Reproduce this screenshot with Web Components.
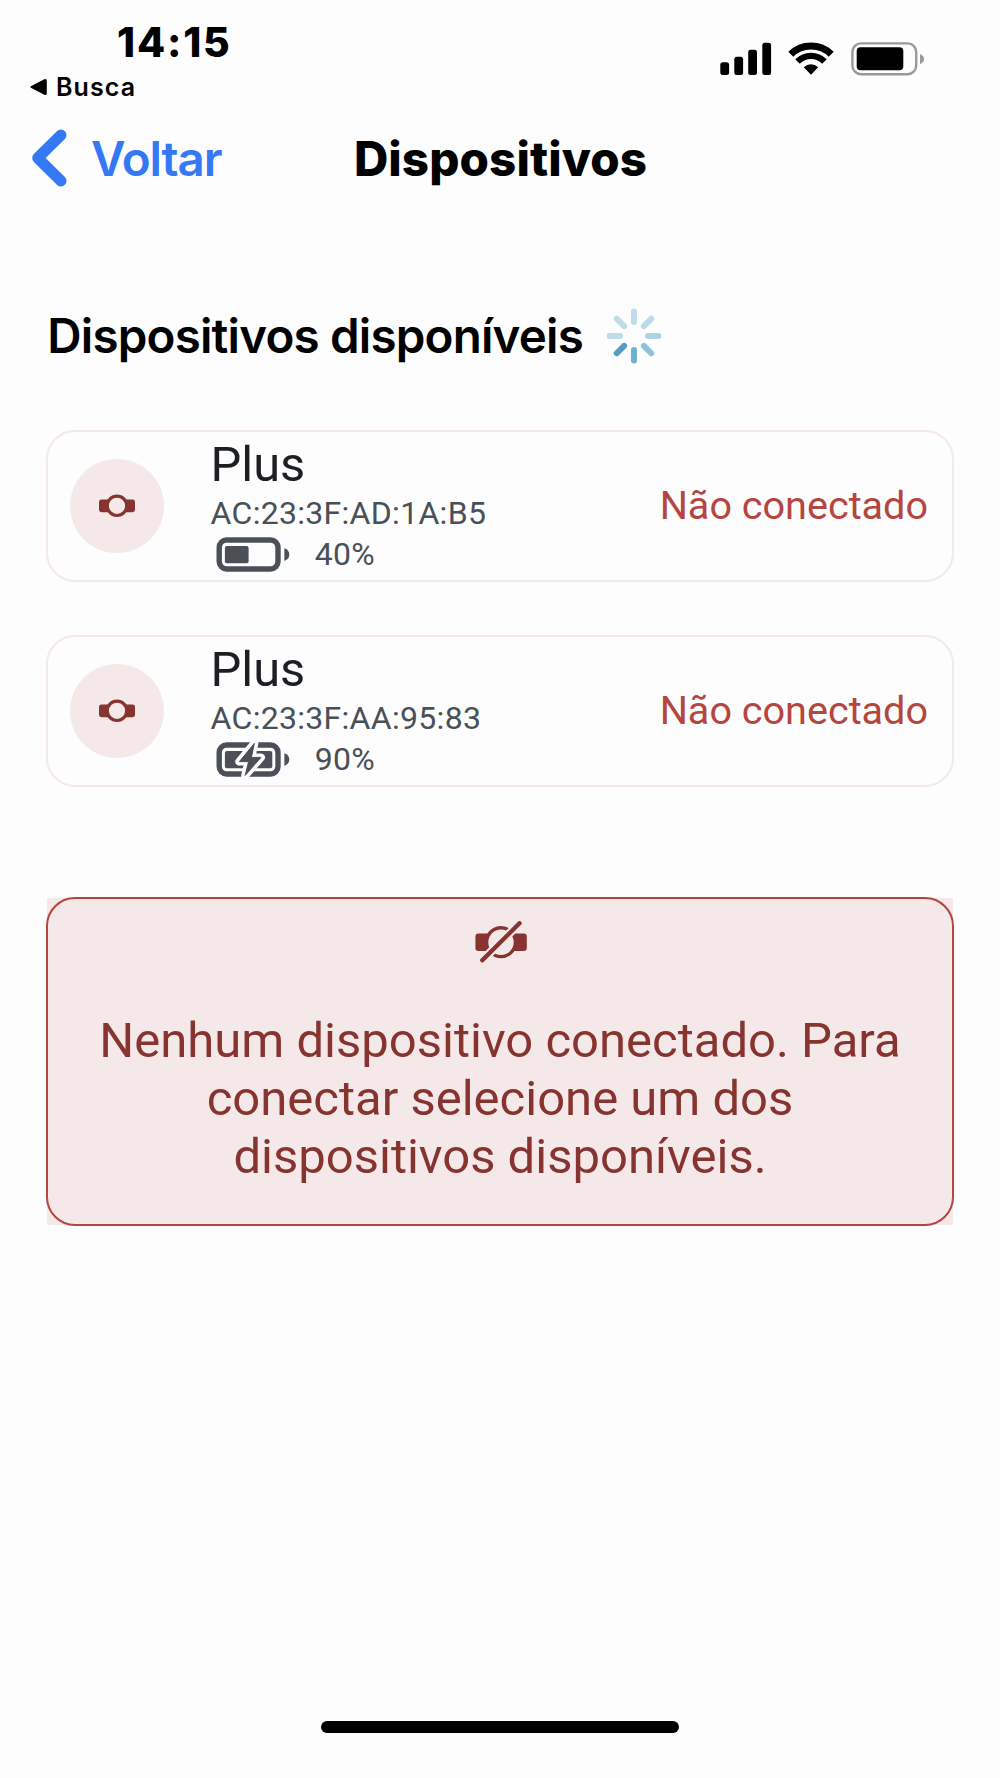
<!DOCTYPE html>
<html lang="pt-BR">
<head>
<meta charset="utf-8">
<title>Dispositivos</title>
<style>
body {
	margin: 0;
	height: 1778px;
	display: flex;
	flex-direction: column;
	background: #fdfdfd;
	color: #000;
	font-family: Inter, "Liberation Sans", sans-serif;
	--color-danger: #b5453f;
	--color-danger-dark: #873431;
	--color-danger-light: #f4e8e8;
	--color-link: #3478f6;
	--color-text: #1c1f24;
	--color-muted: #495057;
	--font-content: Roboto, "Liberation Sans", sans-serif;
}
main {
	flex: 1;
	padding: 91px 46px 0;
}
device-list {
	margin-top: 64px;
}
device-alert {
	margin: 111px 1px 0;
}
</style>
</head>
<body>
<status-bar time="14:15" app="Busca"></status-bar>
<nav-bar back="Voltar">Dispositivos</nav-bar>
<main>
	<section-title>Dispositivos disponíveis</section-title>
	<device-list>
		<device-card mac="AC:23:3F:AD:1A:B5" level="40" status="Não conectado">Plus</device-card>
		<device-card mac="AC:23:3F:AA:95:83" level="90" charging status="Não conectado">Plus</device-card>
	</device-list>
	<device-alert>Nenhum dispositivo conectado. Para conectar selecione um dos dispositivos disponíveis.</device-alert>
</main>
<home-indicator></home-indicator>

<script>
class BaseElement extends HTMLElement {
	constructor() {
		super().attachShadow({ mode: "open" });
	}

	connectedCallback() {
		this.shadowRoot.innerHTML = this.render();
	}
}

class StatusBarElement extends BaseElement {
	render() {
		return `
<style>
:host {
	display: flex;
	justify-content: space-between;
	height: 101px;
	box-sizing: border-box;
	padding: 20px 74px 0 30px;
}
.time {
	padding-left: 87px;
	font-size: 41px;
	font-weight: 800;
	line-height: 44px;
	letter-spacing: 1.8px;
}
.app {
	display: flex;
	align-items: center;
	gap: 9px;
	margin-top: 9px;
	font-size: 25px;
	font-weight: 600;
	line-height: 28px;
	letter-spacing: 1.1px;
}
.icons {
	margin-top: 22px;
}
</style>
<div>
	<div class="time">${this.getAttribute("time")}</div>
	<div class="app">
		<svg width="17" height="18" viewBox="0 0 17 18" aria-hidden="true"><path d="M1.3 7.9 L14.3 1.3 Q16.8 .4 16.8 3 V15 Q16.8 17.6 14.3 16.7 L1.3 10.1 Q-.6 9 1.3 7.9Z"/></svg>
		<span>${this.getAttribute("app")}</span>
	</div>
</div>
<svg class="icons" width="206" height="34" viewBox="0 0 206 34" aria-hidden="true">
	<rect x="0.3" y="20.3" width="8.8" height="12.7" rx="2.5"/>
	<rect x="14.3" y="14.7" width="8.8" height="18.3" rx="2.5"/>
	<rect x="28.2" y="7.8" width="8.8" height="25.2" rx="2.5"/>
	<rect x="42.3" y="0.8" width="8.8" height="32.2" rx="2.5"/>
	<g fill="none" stroke="#000">
		<path d="M70.8 12.3 A29 29 0 0 1 111.2 12.3" stroke-width="7"/>
		<path d="M77.5 19.5 A19 19 0 0 1 104.5 19.5" stroke-width="6.4"/>
	</g>
	<path d="M83.8 25.3 A10.3 10.3 0 0 1 98.2 25.3 L91 32.8Z"/>
	<rect x="132.4" y="1.4" width="63.8" height="30.8" rx="8.5" fill="none" stroke="#999" stroke-width="2.4"/>
	<rect x="136.7" y="5.3" width="46.6" height="23" rx="4"/>
	<path d="M200 12 Q204 13.5 204 17 Q204 20.5 200 22Z" fill="#999"/>
</svg>`;
	}
}

class NavBarElement extends BaseElement {
	render() {
		return `
<style>
:host {
	display: grid;
	grid-template-columns: 1fr auto 1fr;
	align-items: center;
	height: 114px;
	padding: 0 31px 0 32px;
	font-size: 47.5px;
	line-height: 60px;
}
.back {
	display: flex;
	align-items: center;
	gap: 24px;
	color: var(--color-link);
	font-weight: 560;
	letter-spacing: -1.1px;
}
.back span,
.title {
	padding-top: 1px;
}
.title {
	font-weight: 800;
	letter-spacing: 0.1px;
}
</style>
<div class="back">
	<svg width="35" height="58" viewBox="0 0 35 58" fill="none" stroke="currentColor" stroke-width="11" stroke-linecap="round" stroke-linejoin="round" aria-hidden="true"><path d="M29 6 L5.7 29 L29 52"/></svg>
	<span>${this.getAttribute("back")}</span>
</div>
<div class="title"><slot></slot></div>`;
	}
}

class LoadingSpinnerElement extends BaseElement {
	render() {
		// clockwise from the top, the darkest spoke is the current one
		const colors = ["#bfdcea", "#bcdaea", "#afd2e4", "#8fc1da", "#70b0d1", "#579bc5", "#bfdcea", "#bfdcea"];
		const spokes = colors.map((color, i) =>
			`<line x1="28" y1="3.6" x2="28" y2="14" stroke="${color}" transform="rotate(${i * 45} 28 28)"/>`
		);
		return `
<style>
:host {
	display: block;
	height: 56px;
}
</style>
<svg width="56" height="56" viewBox="0 0 56 56" stroke-width="6" stroke-linecap="round" aria-hidden="true">${spokes.join("")}</svg>`;
	}
}

class SectionTitleElement extends BaseElement {
	render() {
		return `
<style>
:host {
	display: flex;
	align-items: center;
	gap: 23px;
	height: 60px;
	padding-left: 1.3px;
	font-size: 47.5px;
	font-weight: 560;
	line-height: 60px;
	letter-spacing: -0.8px;
}
</style>
<span><slot></slot></span>
<loading-spinner></loading-spinner>`;
	}
}

class WatchIconElement extends BaseElement {
	render() {
		return this.hasAttribute("off") ? this.renderOff() : this.renderOn();
	}

	renderOn() {
		return `
<style>:host { display: flex; color: var(--color-danger-dark); }</style>
<svg width="36" height="24" viewBox="0 0 36 24" aria-hidden="true">
	<rect x="0" y="5.5" width="36" height="12.7" rx="2.4" fill="currentColor"/>
	<circle cx="18" cy="11.8" r="9.7" fill="var(--color-danger-light)" stroke="currentColor" stroke-width="3.2"/>
</svg>`;
	}

	renderOff() {
		return `
<style>:host { display: flex; color: var(--color-danger-dark); }</style>
<svg width="52" height="42" viewBox="0 0 52 42" stroke-linecap="round" aria-hidden="true">
	<rect x="0.4" y="12.6" width="51.4" height="17.4" rx="3" fill="currentColor"/>
	<circle cx="26" cy="21.2" r="14.4" fill="var(--color-danger-light)" stroke="currentColor" stroke-width="3.4"/>
	<path d="M7.3 39.3 L44.5 2.3" stroke="var(--color-danger-light)" stroke-width="8.6"/>
	<path d="M7.3 39.3 L44.5 2.3" stroke="currentColor" stroke-width="4.4"/>
</svg>`;
	}
}

class BatteryIconElement extends BaseElement {
	render() {
		// the fill moves in quarters
		const width = (Math.ceil(this.getAttribute("level") / 25) / 4) * 47.4;
		const bolt = "M38.3 1.4 L23.4 19.6 H32.6 L29.2 33.4 L45 15.4 H35.4Z";
		return `
<style>:host { display: flex; color: #4b5058; }</style>
<svg width="74" height="35" viewBox="0 0 74 35" aria-hidden="true">
	<rect x="3.2" y="3" width="58.8" height="29" rx="7.5" fill="none" stroke="currentColor" stroke-width="5.4"/>
	<rect x="8.9" y="9" width="${width}" height="17.2" rx="2" fill="currentColor"/>
	<path d="M68.4 11.2 Q73.3 13 73.3 17.5 Q73.3 22 68.4 24Z" fill="currentColor"/>
	${this.hasAttribute("charging") ? `<path d="${bolt}" fill="#fdfdfd" stroke="#fdfdfd" stroke-width="8" stroke-linejoin="round"/><path d="${bolt}" fill="currentColor" stroke="currentColor" stroke-linejoin="round"/>` : ""}
</svg>`;
	}
}

class DeviceListElement extends BaseElement {
	render() {
		return `
<style>
:host {
	display: flex;
	flex-direction: column;
	gap: 53.5px;
}
</style>
<slot></slot>`;
	}
}

class DeviceCardElement extends BaseElement {
	render() {
		const charging = this.hasAttribute("charging") ? "charging" : "";
		return `
<style>
:host {
	display: flex;
	align-items: center;
	height: 151.5px;
	box-sizing: border-box;
	padding: 0 24px 0 22px;
	border: 2px solid var(--color-danger-light);
	border-radius: 29px;
	font-family: var(--font-content);
}
.avatar {
	display: flex;
	align-items: center;
	justify-content: center;
	width: 94px;
	height: 94px;
	border-radius: 50%;
	background: var(--color-danger-light);
}
.info {
	flex: 1;
	margin-left: 46.5px;
	padding-top: 2px;
	color: var(--color-muted);
	font-size: 32px;
	letter-spacing: 0.3px;
}
.name {
	color: var(--color-text);
	font-size: 48.8px;
	line-height: 50px;
	letter-spacing: 0;
}
.mac {
	margin-top: 5px;
	line-height: 36px;
}
.battery {
	display: flex;
	align-items: center;
	gap: 25px;
	margin-top: 4px;
	padding-left: 5.3px;
	line-height: 39px;
}
.status {
	color: var(--color-danger);
	font-size: 39.6px;
	line-height: 48px;
}
</style>
<div class="avatar"><watch-icon></watch-icon></div>
<div class="info">
	<div class="name"><slot></slot></div>
	<div class="mac">${this.getAttribute("mac")}</div>
	<div class="battery">
		<battery-icon level="${this.getAttribute("level")}" ${charging}></battery-icon>
		<span>${this.getAttribute("level")}%</span>
	</div>
</div>
<div class="status">${this.getAttribute("status")}</div>`;
	}
}

class DeviceAlertElement extends BaseElement {
	render() {
		return `
<style>
:host {
	display: flow-root;
	height: 327px;
	background: var(--color-danger-light);
	color: var(--color-danger-dark);
	font-family: var(--font-content);
}
.frame {
	display: flex;
	flex-direction: column;
	align-items: center;
	gap: 49.6px;
	height: 329px;
	box-sizing: border-box;
	margin: -1px;
	padding: 22px 46px 0;
	border: 2px solid var(--color-danger);
	border-radius: 29px;
}
watch-icon {
	margin-left: 2px;
}
.text {
	font-size: 49px;
	line-height: 57.8px;
	text-align: center;
}
</style>
<div class="frame">
	<watch-icon off></watch-icon>
	<div class="text"><slot></slot></div>
</div>`;
	}
}

class HomeIndicatorElement extends BaseElement {
	render() {
		return `
<style>
:host {
	display: block;
	width: 358px;
	height: 12px;
	margin: 0 auto 45px;
	border-radius: 6px;
	background: #000;
}
</style>`;
	}
}

customElements.define("status-bar", StatusBarElement);
customElements.define("nav-bar", NavBarElement);
customElements.define("loading-spinner", LoadingSpinnerElement);
customElements.define("section-title", SectionTitleElement);
customElements.define("watch-icon", WatchIconElement);
customElements.define("battery-icon", BatteryIconElement);
customElements.define("device-list", DeviceListElement);
customElements.define("device-card", DeviceCardElement);
customElements.define("device-alert", DeviceAlertElement);
customElements.define("home-indicator", HomeIndicatorElement);
</script>
</body>
</html>
